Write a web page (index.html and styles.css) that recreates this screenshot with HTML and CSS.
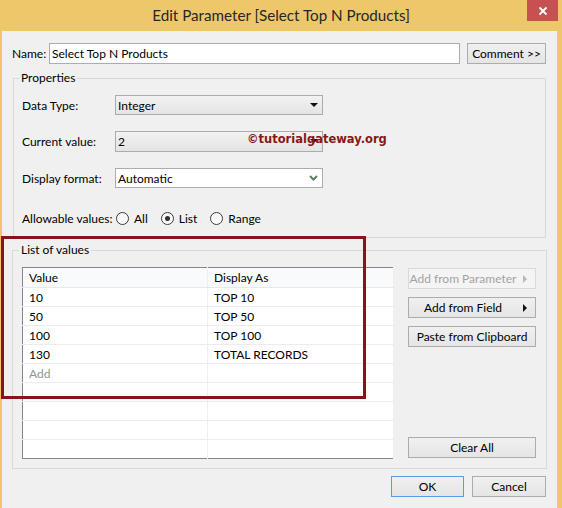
FILE: index.html
```html
<!DOCTYPE html>
<html lang="en">
<head>
  <meta charset="UTF-8">
  <title>Edit Parameter</title>
  <link rel="stylesheet" href="styles.css">
</head>
<body>
  <div class="window">
    <div class="titlebar">
      <span></span>
      <div class="title">Edit Parameter [Select Top N Products]</div>
      <button class="close" aria-label="Close">
        <svg width="10" height="10" viewBox="0 0 10 10"><path d="M1.5 1.5 L8.5 8.5 M8.5 1.5 L1.5 8.5" stroke="#fff" stroke-width="1.8" fill="none"/></svg>
      </button>
    </div>

    <div class="client">
      <div class="name-row">
        <span class="name-label">Name:</span>
        <div class="textbox">Select Top N Products</div>
        <button class="btn btn-comment">Comment &gt;&gt;</button>
      </div>

      <fieldset class="group group-props">
        <legend>Properties</legend>
        <div class="field">
          <span class="field-label">Data Type:</span>
          <div class="combo">
            <span class="combo-text">Integer</span>
            <span class="tri-down"></span>
          </div>
        </div>
        <div class="field field-current">
          <span class="field-label">Current value:</span>
          <div class="combo">
            <span class="combo-text">2</span>
            <span class="tri-down"></span>
          </div>
        </div>
        <div class="field field-format">
          <span class="field-label">Display format:</span>
          <div class="combo combo-white">
            <span class="combo-text">Automatic</span>
            <svg class="chevron" width="9" height="6" viewBox="0 0 9 6"><path d="M1 1 L4.5 4.5 L8 1" stroke="#5f7f5f" stroke-width="2" fill="none"/></svg>
          </div>
        </div>
        <div class="field field-radios">
          <span class="radios-label">Allowable values:</span>
          <span class="radio"></span><span class="radio-text">All</span>
          <span class="radio checked"></span><span class="radio-text">List</span>
          <span class="radio"></span><span class="radio-text">Range</span>
        </div>
      </fieldset>

      <fieldset class="group group-values">
        <legend>List of values</legend>
        <div class="values-body">
          <table class="grid">
            <colgroup><col class="col-value"><col></colgroup>
            <thead>
              <tr><th>Value</th><th>Display As</th></tr>
            </thead>
            <tbody>
              <tr><td>10</td><td>TOP 10</td></tr>
              <tr><td>50</td><td>TOP 50</td></tr>
              <tr><td>100</td><td>TOP 100</td></tr>
              <tr><td>130</td><td>TOTAL RECORDS</td></tr>
              <tr><td class="placeholder">Add</td><td></td></tr>
              <tr><td></td><td></td></tr>
              <tr><td></td><td></td></tr>
              <tr><td></td><td></td></tr>
              <tr><td></td><td></td></tr>
            </tbody>
          </table>
          <div class="side">
            <button class="btn btn-side btn-disabled"><span class="btn-text">Add from Parameter</span><span class="tri-right"></span></button>
            <button class="btn btn-side"><span class="btn-text">Add from Field</span><span class="tri-right"></span></button>
            <button class="btn btn-side">Paste from Clipboard</button>
            <button class="btn btn-side btn-clear">Clear All</button>
          </div>
        </div>
      </fieldset>

      <div class="actions">
        <button class="btn btn-ok">OK</button>
        <button class="btn btn-cancel">Cancel</button>
      </div>

      <div class="watermark">&copy;tutorialgateway.org</div>
      <div class="highlight"></div>
    </div>
  </div>
</body>
</html>
```

FILE: styles.css
```css
* {
  box-sizing: border-box;
}

body {
  margin: 0;
  font-family: Lato, "Noto Sans", sans-serif;
  font-size: 12px;
  color: #000;
  background: #f0f0f0;
}

.window {
  width: 562px;
  height: 508px;
  background: #efc76b;
  display: flex;
  flex-direction: column;
  overflow: hidden;
}

/* title bar */
.titlebar {
  height: 31px;
  flex: none;
  display: grid;
  grid-template-columns: 1fr auto 1fr;
  align-items: start;
}

.title {
  font-size: 15.2px;
  line-height: 30px;
  color: #262626;
  white-space: nowrap;
}

.close {
  justify-self: end;
  margin-right: 4px;
  width: 31px;
  height: 21px;
  border: none;
  padding: 0;
  background: #c75050;
  display: flex;
  align-items: center;
  justify-content: center;
}

/* client area */
.client {
  flex: 1;
  margin: 0 5px 0 2px;
  padding: 12px 11px 0 10px;
  background: #f0f0f0;
  position: relative;
}

.name-row {
  display: flex;
  align-items: center;
  height: 21px;
}

.name-label {
  width: 37px;
  flex: none;
}

.textbox {
  width: 411px;
  height: 21px;
  border: 1px solid #abadb3;
  background: #fff;
  padding-left: 2px;
  line-height: 19px;
  white-space: nowrap;
}

.btn {
  font-family: inherit;
  font-size: 12px;
  color: #000;
  height: 21px;
  padding: 0;
  border: 1px solid #acacac;
  background: linear-gradient(#f0f0f0, #e5e5e5);
  display: flex;
  align-items: center;
  justify-content: center;
  white-space: nowrap;
}

.btn-comment {
  width: 79px;
  margin-left: 7px;
}

/* group boxes */
.group {
  margin: 0;
  padding: 0;
  border: 1px solid #d9d9d9;
  min-width: 0;
}

.group legend {
  padding: 0 2px;
  line-height: 16px;
}

.group-props {
  width: 533px;
  margin: 6px 0 0 1px;
  padding: 9px 0 9px 8px;
}

.group-props legend {
  margin-left: -3px;
}

.field {
  display: flex;
  align-items: center;
  height: 20px;
}

.field-current {
  margin-top: 16px;
}

.field-format {
  margin-top: 17px;
}

.field-radios {
  margin-top: 20px;
}

.field-label {
  width: 93px;
  flex: none;
}

.combo {
  width: 208px;
  height: 20px;
  border: 1px solid #acacac;
  background: linear-gradient(#f2f2f2, #e4e4e4);
  display: flex;
  align-items: center;
  padding: 0 4px 0 2px;
}

.field-current .combo {
  height: 21px;
}

.combo-white {
  background: #fff;
  border-color: #abadb3;
}

.combo-text {
  flex: 1;
}

.tri-down {
  width: 0;
  height: 0;
  border-left: 4px solid transparent;
  border-right: 4px solid transparent;
  border-top: 4px solid #111;
}

.radios-label {
  width: 94px;
  flex: none;
  white-space: nowrap;
}

.radio {
  width: 13px;
  height: 13px;
  border: 1px solid #3c3c3c;
  border-radius: 50%;
  background: linear-gradient(#f4f4f4, #ffffff);
  display: flex;
  align-items: center;
  justify-content: center;
  flex: none;
}

.radio.checked::after {
  content: "";
  width: 5px;
  height: 5px;
  border-radius: 50%;
  background: #303030;
}

.radio-text {
  margin: 0 13px 0 5px;
}

/* list of values */
.group-values {
  width: 535px;
  margin-top: 4px;
  padding: 9px 10px 9px 9px;
}

.group-values legend {
  margin-left: -3px;
}

.values-body {
  display: flex;
  gap: 14px;
}

.grid {
  width: 372px;
  height: 192px;
  border-collapse: collapse;
  table-layout: fixed;
  border: 1px solid #828790;
  background: #fff;
}

.col-value {
  width: 185px;
}

.grid th {
  height: 20px;
  font-weight: normal;
  text-align: left;
  padding: 0 0 0 6px;
  background: #f9fafc;
  border-bottom: 1px solid #e6e8ec;
  border-right: 1px solid #eeeeee;
}

.grid td {
  height: 19px;
  padding: 0 0 0 6px;
  border-bottom: 1px solid #ececec;
  border-right: 1px solid #efefef;
  white-space: nowrap;
}

.grid tr:last-child td {
  border-bottom: none;
}

.grid .placeholder {
  color: #8e9494;
}

.side {
  width: 128px;
  display: flex;
  flex-direction: column;
  gap: 8px;
  padding: 1px 0;
}

.btn-side {
  width: 128px;
}

.btn-text {
  flex: 1;
  text-align: center;
  margin-right: 6px;
}

.tri-right {
  width: 0;
  height: 0;
  border-top: 4px solid transparent;
  border-bottom: 4px solid transparent;
  border-left: 4px solid #111;
  margin-right: 8px;
}

.btn-disabled {
  color: #a3a3a3;
  border-color: #d9d9d9;
  background: #f4f4f4;
}

.btn-disabled .tri-right {
  border-left-color: #b8b8b8;
}

.btn-clear {
  margin-top: auto;
}

.actions {
  display: flex;
  justify-content: flex-end;
  gap: 8px;
  margin-top: 7px;
}

.btn-ok {
  width: 73px;
  border-color: #569de5;
}

.btn-cancel {
  width: 74px;
}

/* overlays on the screenshot */
.watermark {
  position: absolute;
  left: 245px;
  top: 101px;
  font-family: "DejaVu Sans", Verdana, sans-serif;
  font-weight: bold;
  font-size: 11.5px;
  color: #861818;
  white-space: nowrap;
}

.highlight {
  position: absolute;
  left: -1px;
  top: 205px;
  width: 365px;
  height: 163px;
  border: 3px solid #86141a;
}
```
